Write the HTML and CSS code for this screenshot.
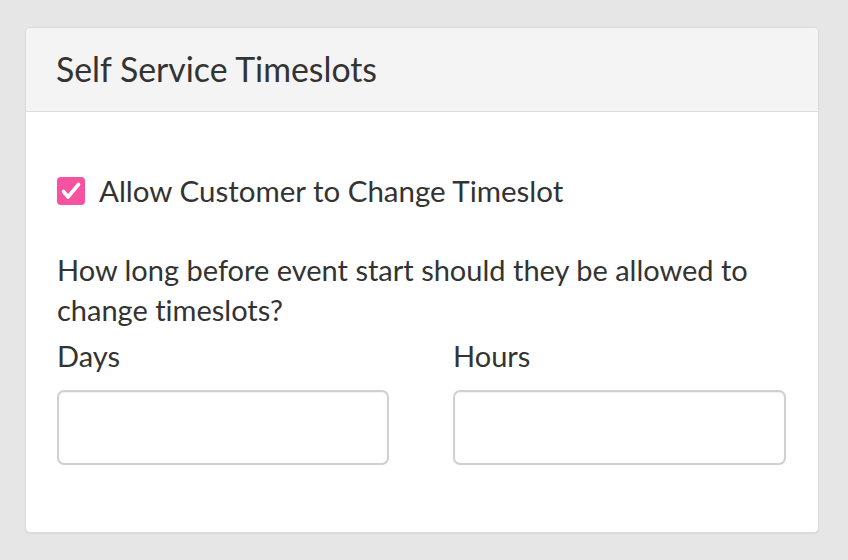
FILE: index.html
```html
<!DOCTYPE html>
<html lang="en">
<head>
<meta charset="utf-8">
<title>Self Service Timeslots</title>
<link rel="stylesheet" href="styles.css">
</head>
<body>
<div class="page">
  <section class="card">
    <header class="card-header">
      <h3 class="card-title">Self Service Timeslots</h3>
    </header>
    <div class="card-body">
      <label class="check">
        <span class="check-box">
          <svg viewBox="0 0 28 28" width="28" height="28" aria-hidden="true">
            <path d="M6.5 14.5 L11 20 L21.5 7.5" fill="none" stroke="#fff" stroke-width="3.6" stroke-linecap="round" stroke-linejoin="round"/>
          </svg>
        </span>
        <span class="check-label">Allow Customer to Change Timeslot</span>
      </label>
      <p class="question">How long before event start should they be allowed to change timeslots?</p>
      <div class="fields">
        <div class="field">
          <label class="field-label" for="days">Days</label>
          <input class="field-input" id="days" type="text">
        </div>
        <div class="field">
          <label class="field-label" for="hours">Hours</label>
          <input class="field-input" id="hours" type="text">
        </div>
      </div>
    </div>
  </section>
</div>
</body>
</html>
```
FILE: styles.css
```css
* { box-sizing: border-box; }
html, body {
  margin: 0;
  padding: 0;
  background: #e6e6e6;
}
body {
  font-family: Lato, "Open Sans", "Liberation Sans", sans-serif;
  font-variant-ligatures: none;
  color: #333;
  width: 848px;
  height: 560px;
  overflow: hidden;
}
.page {
  padding: 27px 29px 0 25px;
}
.card {
  background: #fff;
  border: 1px solid #dcdcdc;
  border-radius: 5px;
  box-shadow: 0 1px 2px rgba(0,0,0,0.06);
  height: 506px;
  overflow: hidden;
}
.card-header {
  background: #f4f4f4;
  border-bottom: 1px solid #dddddd;
  height: 84px;
  display: flex;
  align-items: center;
  padding: 0 30px;
}
.card-title {
  margin: 0;
  font-size: 33.8px;
  font-weight: 400;
  line-height: 1.1;
  color: #333;
}
.card-body {
  padding: 59px 32px 0 31px;
}
.check {
  display: flex;
  align-items: center;
  height: 40px;
  gap: 14px;
}
.check-box {
  width: 28px;
  height: 28px;
  border-radius: 4px;
  background: #f652a0;
  display: flex;
}
.check-label {
  font-size: 29.5px;
  line-height: 40px;
}
.question {
  margin: 39px 0 0;
  font-size: 29px;
  line-height: 40px;
}
.fields {
  margin-top: 6px;
  display: grid;
  grid-template-columns: 332px 333px;
  column-gap: 64px;
}
.field-label {
  display: block;
  font-size: 29px;
  line-height: 40px;
}
.field-input {
  display: block;
  margin-top: 14px;
  width: 100%;
  height: 75px;
  border: 2px solid #d0d0d0;
  border-radius: 7px;
  background: #fff;
  box-shadow: inset 0 1px 2px rgba(0,0,0,0.06);
  font: inherit;
  padding: 0 20px;
}
```
